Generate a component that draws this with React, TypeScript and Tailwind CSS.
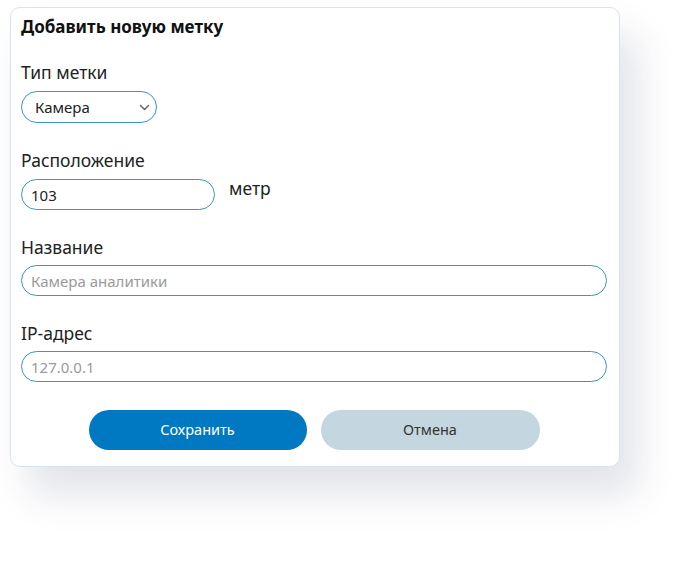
import React from 'react';

const font = { fontFamily: '"Noto Sans", Roboto, sans-serif' };

const inputCls =
  'h-[31px] rounded-full border-[1.5px] border-[#3a93d2] bg-white pl-[9px] pr-3 text-[15px] text-[#222] placeholder:text-[#9b9b9b] outline-none';

const labelCls = 'text-[17.5px] leading-6 text-[#222]';

const AddMarker: React.FC = () => {
  return (
    <div className="ml-[10px] mt-[7px] w-[610px] rounded-[10px] border border-[#d6e4f1] bg-white pl-[10px] pr-[12px] pt-[7px] pb-[16px] shadow-[18px_28px_38px_rgba(40,50,90,0.13)]">
      <h2 className="text-[17px] font-bold leading-6 text-[#111]">Добавить новую метку</h2>

      {/* Тип метки */}
      <div className={`mt-[21px] ${labelCls}`}>Тип метки</div>
      <div className="relative mt-[7px] w-[136px]">
        <select className="h-[32px] w-full appearance-none rounded-full border-[1.5px] border-[#3a93d2] bg-white pl-[13px] text-[15px] text-[#222] outline-none">
          <option>Камера</option>
        </select>
        <svg className="pointer-events-none absolute right-[7px] top-[13px]" width="11" height="7" viewBox="0 0 11 7" fill="none">
          <path d="M1.5 1.5L5.5 5.5L9.5 1.5" stroke="#666" strokeWidth="1.5" strokeLinecap="round" strokeLinejoin="round" />
        </svg>
      </div>

      {/* Расположение */}
      <div className={`mt-[25px] ${labelCls}`}>Расположение</div>
      <div className="mt-[7px] flex items-start gap-[14px]">
        <input className={`${inputCls} w-[194px]`} defaultValue="103" />
        <span className={`-mt-[3px] ${labelCls}`}>метр</span>
      </div>

      {/* Название */}
      <div className={`mt-[25px] ${labelCls}`}>Название</div>
      <input className={`${inputCls} mt-[6px] block w-full`} placeholder="Камера аналитики" />

      {/* IP-адрес */}
      <div className={`mt-[25px] ${labelCls}`}>IP-адрес</div>
      <input className={`${inputCls} mt-[6px] block w-full`} placeholder="127.0.0.1" />

      <div className="mt-[28px] flex justify-center gap-[14px]">
        <button className="h-[40px] w-[218px] rounded-full bg-[#0079c2] text-[14.5px] text-white">Сохранить</button>
        <button className="h-[40px] w-[219px] rounded-full bg-[#c4d6df] text-[14.5px] text-[#333]">Отмена</button>
      </div>
    </div>
  );
};

export default function App() {
  return (
    <div className="h-[571px] w-[699px] bg-white" style={font}>
      <AddMarker />
    </div>
  );
}
